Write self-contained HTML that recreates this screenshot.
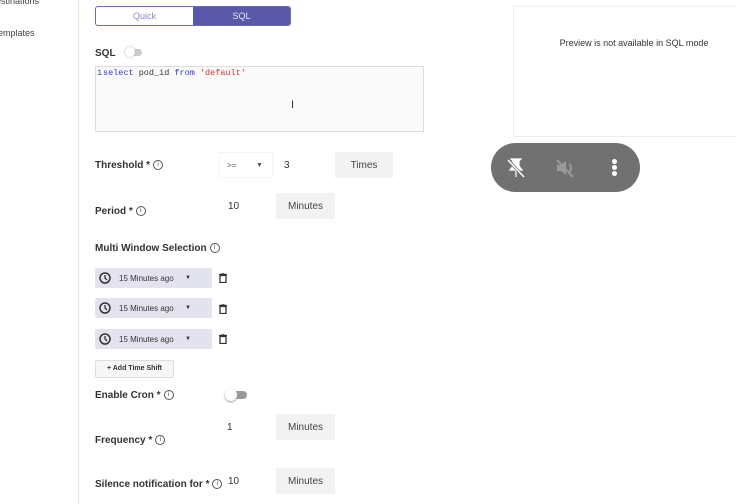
<!DOCTYPE html><html><head><style>
body{margin:0;width:736px;height:504px;background:#fff;font-family:"Liberation Sans",sans-serif;position:relative;overflow:hidden;color:#333}
.a{position:absolute}
.lbl{font-size:10px;font-weight:bold;color:#333}
.i{display:inline-block;width:8px;height:8px;border:1px solid #555;border-radius:50%;font-size:6px;text-align:center;line-height:8px;font-weight:normal;vertical-align:middle;margin-left:3px}
.btn{background:#f2f2f2;font-size:10px;color:#444;display:flex;align-items:center;justify-content:center}
.v{display:flex;align-items:center;font-size:10px}
.chip{background:#e3e3f0;border-radius:2px;width:117px;height:20px;font-size:8px;color:#333}
</style></head><body>
<div class="a" style="left:78px;top:0;width:1px;height:504px;background:#e6e6e6"></div>
<div class="a" style="left:-4px;top:-4px;font-size:9px;color:#444">estinations</div>
<div class="a" style="left:-2px;top:28px;font-size:9px;color:#444">emplates</div>
<div class="a" style="left:95px;top:6px;width:194px;height:18px;border:1px solid #6a6ab8;border-radius:3px;overflow:hidden;font-size:9px">
<div class="a" style="left:0;top:0;width:97px;height:18px;line-height:18px;text-align:center;color:#8a8ac8">Quick</div>
<div class="a" style="left:97px;top:0;width:97px;height:18px;line-height:18px;text-align:center;background:#5a58a8;color:#e6e6f6">SQL</div></div>
<div class="a lbl" style="left:95px;top:48px">SQL</div>
<div class="a" style="left:126px;top:49px;width:16px;height:7px;border-radius:4px;background:#ccc"></div>
<div class="a" style="left:125px;top:47px;width:10px;height:10px;border-radius:50%;background:#fff;box-shadow:0 0 2px #aaa"></div>
<div class="a" style="left:95px;top:66px;width:327px;height:64px;border:1px solid #ddd;background:#fafafa;font-family:'Liberation Mono',monospace;font-size:8.5px"><span class="a" style="left:1px;top:1px;color:#448">1</span><span class="a" style="left:7px;top:1px"><span style="color:#33c">select</span> pod_id <span style="color:#33c">from</span> <span style="color:#c33">'default'</span></span></div>
<div class="a" style="left:291px;top:99px;font-size:11px">I</div>
<div class="a lbl" style="left:95px;top:160px">Threshold *<span class="i">i</span></div>
<div class="a" style="left:219px;top:152px;width:54px;height:26px;border:1px solid #f4f4f4;box-sizing:border-box"></div>
<div class="a v" style="left:227px;top:152px;height:26px;font-size:8px;color:#555">&gt;=</div>
<div class="a v" style="left:256px;top:152px;height:26px;font-size:7px;color:#555">▼</div>
<div class="a v" style="left:284px;top:152px;height:26px">3</div>
<div class="a btn" style="left:335px;top:152px;width:58px;height:26px">Times</div>
<div class="a lbl" style="left:95px;top:206px">Period *<span class="i">i</span></div>
<div class="a v" style="left:228px;top:193px;height:26px">10</div>
<div class="a btn" style="left:276px;top:193px;width:59px;height:26px">Minutes</div>
<div class="a lbl" style="left:95px;top:243px">Multi Window Selection<span class="i">i</span></div>
<div class="a chip" style="left:95px;top:268px"><svg class="a" style="left:4px;top:4px" width="12" height="12"><circle cx="6" cy="6" r="5" fill="none" stroke="#333" stroke-width="1.5"/><path d="M6 3v3l2 2" stroke="#333" fill="none" stroke-width="1.3"/></svg><span class="a" style="left:24px;top:6px">15 Minutes ago</span><span class="a" style="left:90px;top:7px;font-size:6px">▼</span></div>
<div class="a chip" style="left:95px;top:298px"><svg class="a" style="left:4px;top:4px" width="12" height="12"><circle cx="6" cy="6" r="5" fill="none" stroke="#333" stroke-width="1.5"/><path d="M6 3v3l2 2" stroke="#333" fill="none" stroke-width="1.3"/></svg><span class="a" style="left:24px;top:6px">15 Minutes ago</span><span class="a" style="left:90px;top:7px;font-size:6px">▼</span></div>
<div class="a chip" style="left:95px;top:329px"><svg class="a" style="left:4px;top:4px" width="12" height="12"><circle cx="6" cy="6" r="5" fill="none" stroke="#333" stroke-width="1.5"/><path d="M6 3v3l2 2" stroke="#333" fill="none" stroke-width="1.3"/></svg><span class="a" style="left:24px;top:6px">15 Minutes ago</span><span class="a" style="left:90px;top:7px;font-size:6px">▼</span></div>
<svg class="a" style="left:219px;top:273px" width="8" height="10"><path d="M0 1.5h8M2.5 0h3M1 2.5h6v7H1z" stroke="#333" fill="none" stroke-width="1.3"/></svg>
<svg class="a" style="left:219px;top:304px" width="8" height="10"><path d="M0 1.5h8M2.5 0h3M1 2.5h6v7H1z" stroke="#333" fill="none" stroke-width="1.3"/></svg>
<svg class="a" style="left:219px;top:334px" width="8" height="10"><path d="M0 1.5h8M2.5 0h3M1 2.5h6v7H1z" stroke="#333" fill="none" stroke-width="1.3"/></svg>
<div class="a" style="left:95px;top:360px;width:77px;height:16px;border:1px solid #ddd;border-radius:2px;background:#f6f6f6;font-size:7px;font-weight:bold;line-height:16px;text-align:center">+ Add Time Shift</div>
<div class="a lbl" style="left:95px;top:390px">Enable Cron *<span class="i">i</span></div>
<div class="a" style="left:228px;top:391px;width:19px;height:8px;border-radius:4px;background:#999"></div>
<div class="a" style="left:225px;top:389px;width:12px;height:12px;border-radius:50%;background:#fff;box-shadow:0 1px 2px #999"></div>
<div class="a v" style="left:227px;top:414px;height:26px">1</div>
<div class="a btn" style="left:276px;top:414px;width:59px;height:26px">Minutes</div>
<div class="a lbl" style="left:95px;top:435px">Frequency *<span class="i">i</span></div>
<div class="a lbl" style="left:95px;top:479px">Silence notification for *<span class="i">i</span></div>
<div class="a v" style="left:228px;top:468px;height:26px">10</div>
<div class="a btn" style="left:276px;top:468px;width:59px;height:26px">Minutes</div>
<div class="a" style="left:513px;top:6px;width:224px;height:129px;border:1px solid #eee"></div>
<div class="a" style="left:513px;top:38px;width:242px;text-align:center;font-size:9px;color:#333">Preview is not available in SQL mode</div>
<div class="a" style="left:491px;top:143px;width:149px;height:49px;border-radius:25px;background:#717171"></div>
<svg class="a" style="left:505px;top:157px" width="22" height="22"><path d="M6 2h10l-2 2v5l3 4H5l3-4V4z M11 13v7" fill="#fff" stroke="#fff" stroke-width="1.2"/><path d="M3 3l16 17" stroke="#717171" stroke-width="3"/><path d="M3 3l16 17" stroke="#fff" stroke-width="1.5"/></svg>
<svg class="a" style="left:554px;top:157px" width="22" height="22"><path d="M3 8h4l5-4v14l-5-4H3z" fill="#9a9a9a"/><path d="M15 7a5 5 0 010 8" stroke="#9a9a9a" fill="none" stroke-width="2"/><path d="M3 3l16 17" stroke="#9a9a9a" stroke-width="2"/></svg>
<div class="a" style="left:612px;top:159px;width:5px;height:5px;border-radius:50%;background:#fff;box-shadow:0 6px 0 #fff,0 12px 0 #fff"></div>
</body></html>
